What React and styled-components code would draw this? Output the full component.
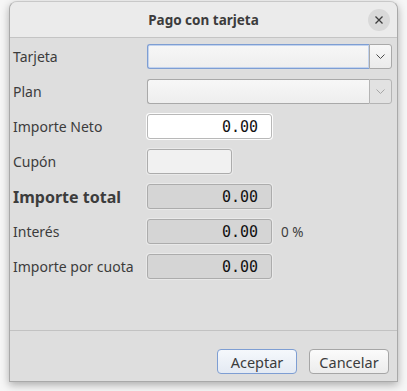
import React from "react";
import styled, { createGlobalStyle } from "styled-components";

const Global = createGlobalStyle`
  body {
    margin: 0;
    background: #f6f6f6;
    font-family: "Noto Sans", "DejaVu Sans", sans-serif;
  }
`;

const rows = [
  { label: "Importe total", value: "0.00", bold: true },
  { label: "Interés", value: "0.00", suffix: "0 %" },
  { label: "Importe por cuota", value: "0.00" },
];

const App = () => {
  return (
    <>
      <Global />
      <Page>
        <Window>
          <TitleBar>
            <Title>Pago con tarjeta</Title>
            <CloseButton>
              <svg width="10" height="10" viewBox="0 0 10 10">
                <path d="M1.5 1.5 L8.5 8.5 M8.5 1.5 L1.5 8.5" stroke="#3c3c3c" strokeWidth="1.3" />
              </svg>
            </CloseButton>
          </TitleBar>
          <Form>
            <Label>Tarjeta</Label>
            <Combo>
              <ComboField $focus />
              <ComboArrow>
                <Chevron />
              </ComboArrow>
            </Combo>

            <Label>Plan</Label>
            <Combo>
              <ComboField $disabled />
              <ComboArrow $disabled>
                <Chevron color="#a6a6a6" />
              </ComboArrow>
            </Combo>

            <Label>Importe Neto</Label>
            <Cell>
              <Field $kind="edit">0.00</Field>
            </Cell>

            <Label>Cupón</Label>
            <Cell>
              <Field $kind="empty" $short />
            </Cell>

            {rows.map((r) => (
              <React.Fragment key={r.label}>
                <Label $bold={r.bold}>{r.label}</Label>
                <Cell>
                  <Field $kind="readonly">{r.value}</Field>
                  {r.suffix && <Suffix>{r.suffix}</Suffix>}
                </Cell>
              </React.Fragment>
            ))}
          </Form>
          <Footer>
            <Button $default>Aceptar</Button>
            <Button>Cancelar</Button>
          </Footer>
        </Window>
      </Page>
    </>
  );
};

const Chevron = ({ color = "#4a4a4a" }) => (
  <svg width="9" height="5" viewBox="0 0 9 5">
    <path d="M0.5 0.5 L4.5 4.5 L8.5 0.5" fill="none" stroke={color} strokeWidth="1" />
  </svg>
);

const Page = styled.div`
  width: 407px;
  height: 391px;
  padding: 1px 0 0 9px;
  box-sizing: border-box;
`;

const Window = styled.div`
  width: 389px;
  height: 381px;
  box-sizing: border-box;
  display: flex;
  flex-direction: column;
  background: #dedede;
  border: 1px solid #a9a9a9;
  border-top-color: #c8c8c8;
  border-radius: 8px 8px 0 0;
  box-shadow: 0 3px 9px rgba(0, 0, 0, 0.3);
  color: #3c3c3c;
`;

const TitleBar = styled.div`
  height: 35px;
  flex-shrink: 0;
  display: flex;
  align-items: center;
  justify-content: center;
  position: relative;
  background: #ebebeb;
  border-bottom: 1px solid #c4c4c4;
  border-radius: 7px 7px 0 0;
`;

const Title = styled.div`
  font-weight: bold;
  font-size: 13.5px;
  color: #3c3c3c;
`;

const CloseButton = styled.div`
  position: absolute;
  right: 7px;
  top: 7px;
  width: 22px;
  height: 22px;
  border-radius: 50%;
  background: #d9d9d9;
  display: flex;
  align-items: center;
  justify-content: center;
`;

const Form = styled.div`
  flex: 1;
  display: grid;
  grid-template-columns: 134px 1fr;
  grid-auto-rows: 25px;
  row-gap: 10px;
  padding: 6px 5px 0 3px;
  align-items: center;
`;

const Label = styled.div`
  font-size: ${(p) => (p.$bold ? "16px" : "14px")};
  font-weight: ${(p) => (p.$bold ? "bold" : "normal")};
  color: #3c3c3c;
  white-space: nowrap;
`;

const Combo = styled.div`
  display: flex;
  height: 25px;
`;

const ComboField = styled.div`
  flex: 1;
  box-sizing: border-box;
  border: 1px solid ${(p) => (p.$focus ? "#7e9ed3" : "#a9a9a9")};
  border-right: none;
  border-radius: 3px 0 0 3px;
  background: linear-gradient(#f7f7f7, #eeeeee);
  box-shadow: ${(p) => (p.$focus ? "inset 0 0 0 1px #c2d3ee" : "none")};
`;

const ComboArrow = styled.div`
  width: 23px;
  box-sizing: border-box;
  display: flex;
  align-items: center;
  justify-content: center;
  border: 1px solid ${(p) => (p.$disabled ? "#b4b4b4" : "#a9a9a9")};
  border-radius: 0 3px 3px 0;
  background: ${(p) => (p.$disabled ? "#e2e2e2" : "linear-gradient(#f7f7f7, #ebebeb)")};
`;

const Cell = styled.div`
  display: flex;
  align-items: center;
  gap: 9px;
`;

const fieldBg = { edit: "#ffffff", empty: "#f1f1f1", readonly: "#d5d5d5" };

const Field = styled.div`
  width: ${(p) => (p.$short ? "85px" : "125px")};
  height: 25px;
  box-sizing: border-box;
  padding: 0 13px 0 0;
  display: flex;
  align-items: center;
  justify-content: flex-end;
  background: ${(p) => fieldBg[p.$kind]};
  border: 1px solid ${(p) => (p.$kind === "edit" ? "#b8b8b8" : "#acacac")};
  border-radius: 3px;
  box-shadow: 0 0 0 1px rgba(255, 255, 255, ${(p) => (p.$kind === "edit" ? 0.9 : 0.35)});
  font-family: "DejaVu Sans Mono", monospace;
  font-size: 15px;
  color: #111;
`;

const Suffix = styled.span`
  font-size: 13.5px;
  color: #3c3c3c;
`;

const Footer = styled.div`
  height: 51px;
  flex-shrink: 0;
  box-sizing: border-box;
  border-top: 1px solid #c2c2c2;
  display: flex;
  justify-content: flex-end;
  align-items: flex-start;
  gap: 12px;
  padding: 18px 8px 0 0;
`;

const Button = styled.button`
  width: 80px;
  height: 25px;
  box-sizing: border-box;
  border-radius: 4px;
  border: 1px solid ${(p) => (p.$default ? "#7e9ed3" : "#a6a6a6")};
  background: ${(p) =>
    p.$default ? "linear-gradient(#f5f8fc, #e4eaf3)" : "linear-gradient(#fbfbfb, #ececec)"};
  font-family: "Noto Sans", "DejaVu Sans", sans-serif;
  font-size: 14.5px;
  color: #3c3c3c;
  padding: 0;
`;

export default App;
